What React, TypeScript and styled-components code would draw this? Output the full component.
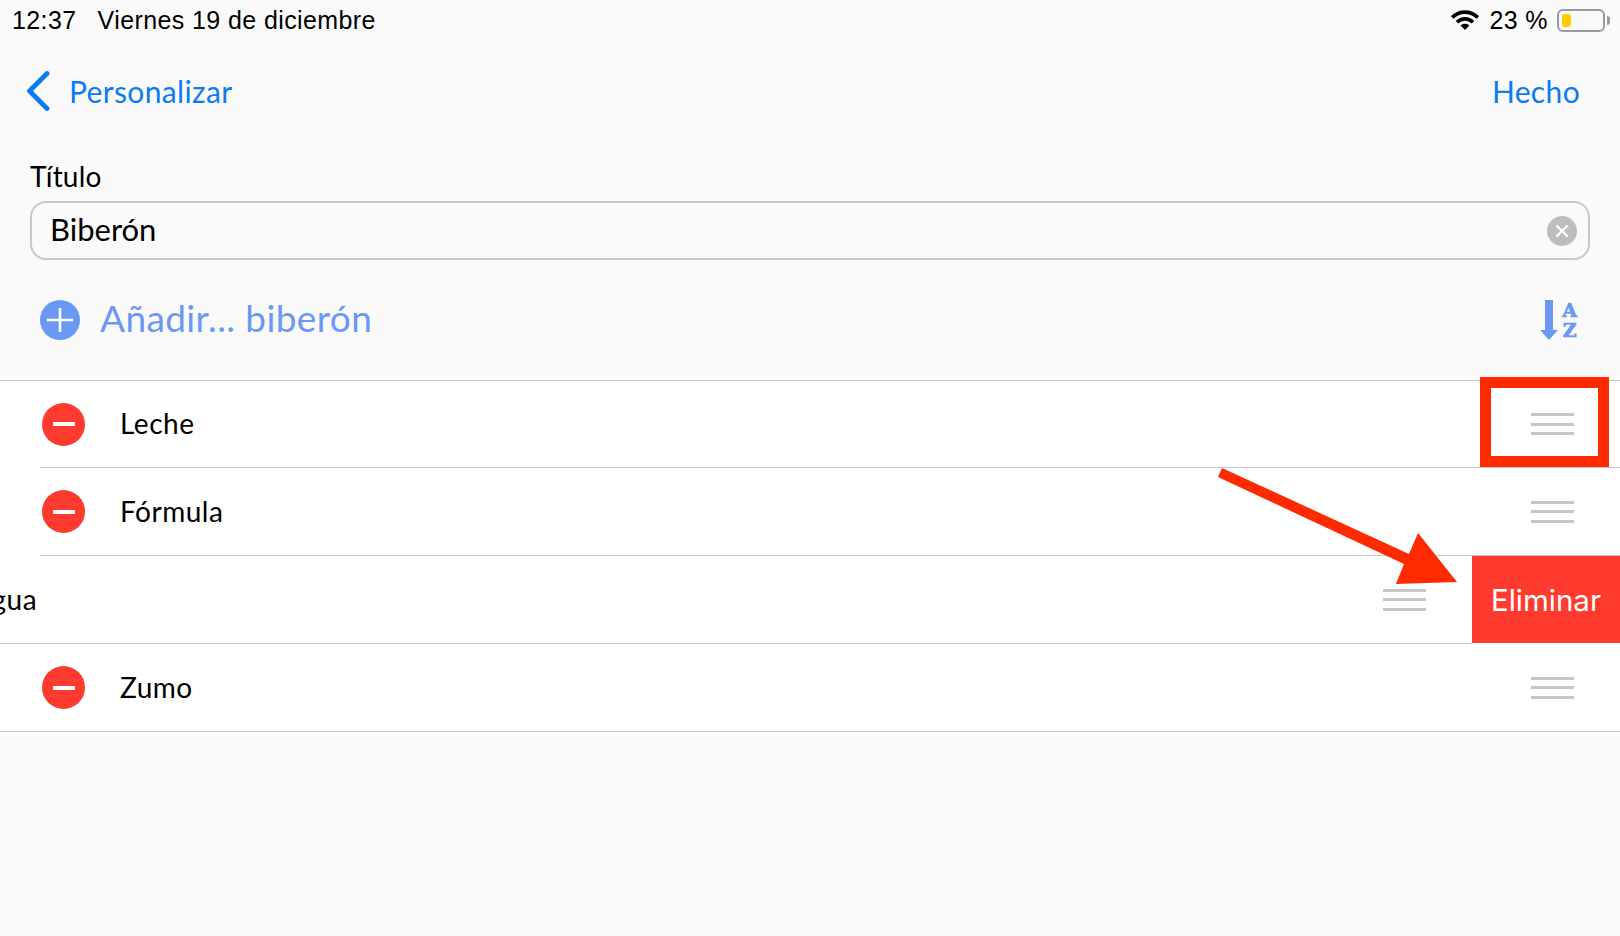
import React, { FC } from 'react';
import styled, { createGlobalStyle } from 'styled-components';

const GlobalStyle = createGlobalStyle`
html, body {
    margin: 0;
    padding: 0;
    background: #fafafa;
}
`;

const BLUE = '#0a7bf0';
const SOFT_BLUE = '#6a98f2';
const LIST_FONT = `"Lato", "Open Sans", sans-serif`;

const Page = styled.div`
position: relative;
width: 1620px;
height: 936px;
overflow: hidden;
background: #fafafa;
color: #000;
font-family: ${LIST_FONT};
`;

const StatusBar = styled.div`
display: flex;
align-items: center;
height: 40px;
padding: 0 10px 0 12px;
font-family: "Liberation Sans", sans-serif;
font-size: 25px;
letter-spacing: 0.4px;
`;

const StatusDate = styled.span`
margin-left: 21px;
flex: 1;
`;

const Percent = styled.span`
margin: 0 9px 0 10px;
`;

const Battery = styled.div`
box-sizing: border-box;
width: 48px;
height: 23px;
padding: 3px;
border: 2px solid #9a9a9a;
border-radius: 6px;
`;

const BatteryLevel = styled.div`
width: 9px;
height: 100%;
background: #ffcc00;
border-radius: 3px;
`;

const BatteryNub = styled.div`
width: 3px;
height: 9px;
margin-left: 2px;
background: #9a9a9a;
border-radius: 0 3px 3px 0;
`;

const NavBar = styled.div`
display: flex;
align-items: center;
justify-content: space-between;
height: 102px;
padding: 0 40px 0 26px;
font-size: 30px;
letter-spacing: 0.35px;
color: ${BLUE};
`;

const BackLink = styled.div`
display: flex;
align-items: center;
gap: 19px;
`;

const FieldLabel = styled.div`
box-sizing: border-box;
height: 59px;
padding: 18px 0 0 30px;
font-size: 28px;
letter-spacing: 0.2px;
line-height: 32px;
`;

const Field = styled.div`
display: flex;
align-items: center;
justify-content: space-between;
box-sizing: border-box;
width: 1560px;
height: 59px;
margin-left: 30px;
padding: 0 11px 0 18px;
border: 2px solid #c8c8c8;
border-radius: 16px;
font-size: 31px;
`;

const FieldValue = styled.span`
margin-top: -4px;
`;

const ClearButton = styled.div`
display: flex;
align-items: center;
justify-content: center;
width: 30px;
height: 30px;
border-radius: 50%;
background: #bdbdbd;
`;

const AddRow = styled.div`
display: flex;
align-items: center;
justify-content: space-between;
height: 120px;
padding: 0 43px 0 40px;
color: ${SOFT_BLUE};
font-size: 37px;
letter-spacing: 0.4px;
`;

const AddLabel = styled.div`
display: flex;
align-items: center;
gap: 20px;
`;

const AddText = styled.span`
margin-top: -6px;
`;

const SortIcon = styled.div`
display: flex;
align-items: center;
gap: 4px;
`;

const SortLetters = styled.div`
display: flex;
flex-direction: column;
align-items: center;
font-family: "DejaVu Serif", serif;
font-weight: 700;
font-size: 19px;
line-height: 20px;
letter-spacing: 0;
-webkit-text-stroke: 0.7px ${SOFT_BLUE};
`;

const List = styled.div`
background: #fff;
`;

const Separator = styled.div<{ $inset?: number; $endInset?: number }>`
height: 1px;
margin-left: ${p => p.$inset ?? 0}px;
margin-right: ${p => p.$endInset ?? 0}px;
background: #c8c8c8;
`;

const Row = styled.div<{ $height?: number }>`
position: relative;
height: ${p => p.$height ?? 87}px;
overflow: hidden;
`;

const RowContent = styled.div<{ $shift?: number }>`
display: flex;
align-items: center;
height: 100%;
padding: 0 46px 0 42px;
font-size: 28px;
letter-spacing: 0.5px;
transform: translateX(${p => p.$shift ?? 0}px);
`;

const RemoveIcon = styled.div`
display: flex;
align-items: center;
justify-content: center;
flex: none;
width: 43px;
height: 43px;
margin-right: 35px;
border-radius: 50%;
background: #ff3b30;
`;

const RemoveBar = styled.div`
width: 22px;
height: 4px;
border-radius: 1px;
background: #fff;
`;

const RowLabel = styled.span`
flex: 1;
margin-top: -2px;
`;

const Handle = styled.div`
display: flex;
flex-direction: column;
gap: 6.5px;
width: 43px;
`;

const HandleLine = styled.div`
height: 3px;
background: #c6c6c6;
`;

const DeleteAction = styled.div`
position: absolute;
top: 0;
right: 0;
bottom: 0;
display: flex;
align-items: center;
justify-content: center;
width: 148px;
background: #ff3b30;
color: #fff;
font-family: "Inter", sans-serif;
font-size: 29.5px;
`;

const HighlightBox = styled.div`
position: absolute;
left: 1480px;
top: 377px;
box-sizing: border-box;
width: 129px;
height: 90px;
border: 11px solid #ff2a00;
`;

const ArrowOverlay = styled.svg`
position: absolute;
left: 0;
top: 0;
pointer-events: none;
`;

const DragHandle: FC = () => (
    <Handle>
        <HandleLine />
        <HandleLine />
        <HandleLine />
    </Handle>
);

const ItemRow: FC<{ label: string; height?: number }> = ({ label, height }) => (
    <Row $height={height}>
        <RowContent>
            <RemoveIcon><RemoveBar /></RemoveIcon>
            <RowLabel>{label}</RowLabel>
            <DragHandle />
        </RowContent>
    </Row>
);

export default function App() {
    return (
        <Page>
            <GlobalStyle />
            <StatusBar>
                <span>12:37</span>
                <StatusDate>Viernes 19 de diciembre</StatusDate>
                <svg width="28" height="20" viewBox="0 0 28 20">
                    <path d="M1.2 7.4 C8.5 0.4 19.5 0.4 26.8 7.4" fill="none" stroke="#000" strokeWidth="3.6" />
                    <path d="M6 12.2 C10.5 7.8 17.5 7.8 22 12.2" fill="none" stroke="#000" strokeWidth="3.6" />
                    <path d="M9.6 15.4 C12 13.2 16 13.2 18.4 15.4 L14 20 Z" fill="#000" />
                </svg>
                <Percent>23 %</Percent>
                <Battery><BatteryLevel /></Battery>
                <BatteryNub />
            </StatusBar>
            <NavBar>
                <BackLink>
                    <svg width="24" height="40" viewBox="0 0 24 40">
                        <path d="M21 2.5 L3.5 20 L21 37.5" fill="none" stroke={BLUE} strokeWidth="4.8" strokeLinecap="round" strokeLinejoin="round" />
                    </svg>
                    <span>Personalizar</span>
                </BackLink>
                <span>Hecho</span>
            </NavBar>
            <FieldLabel>Título</FieldLabel>
            <Field>
                <FieldValue>Biberón</FieldValue>
                <ClearButton>
                    <svg width="14" height="14" viewBox="0 0 14 14">
                        <path d="M2 2 L12 12 M12 2 L2 12" stroke="#fff" strokeWidth="2.4" strokeLinecap="round" />
                    </svg>
                </ClearButton>
            </Field>
            <AddRow>
                <AddLabel>
                    <svg width="40" height="40" viewBox="0 0 40 40">
                        <circle cx="20" cy="20" r="20" fill={SOFT_BLUE} />
                        <path d="M20 8 V32 M7 20 H33" stroke="#fff" strokeWidth="2.6" />
                    </svg>
                    <AddText>Añadir... biberón</AddText>
                </AddLabel>
                <SortIcon>
                    <svg width="18" height="40" viewBox="0 0 18 40">
                        <path d="M5 0 H13 V30 H18 L9 40 L0 30 H5 Z" fill={SOFT_BLUE} />
                    </svg>
                    <SortLetters>
                        <span>A</span>
                        <span>Z</span>
                    </SortLetters>
                </SortIcon>
            </AddRow>
            <List>
                <Separator />
                <ItemRow label="Leche" height={86} />
                <Separator $inset={40} />
                <ItemRow label="Fórmula" />
                <Separator $inset={40} />
                <Row>
                    <RowContent $shift={-148}>
                        <RemoveIcon><RemoveBar /></RemoveIcon>
                        <RowLabel>Agua</RowLabel>
                        <DragHandle />
                    </RowContent>
                    <DeleteAction>Eliminar</DeleteAction>
                </Row>
                <Separator $endInset={148} />
                <ItemRow label="Zumo" />
                <Separator />
            </List>
            <HighlightBox />
            <ArrowOverlay width="1620" height="936" viewBox="0 0 1620 936">
                <polygon points="1222,468 1409,554 1418,533 1457,582 1396,584 1404,564 1218,477" fill="#ff2a00" />
            </ArrowOverlay>
        </Page>
    );
}
